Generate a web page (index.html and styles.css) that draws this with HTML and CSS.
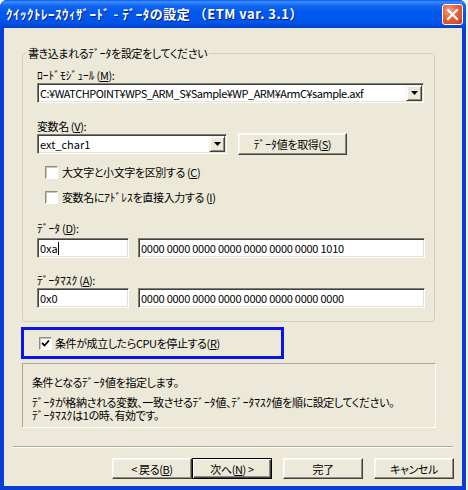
FILE: index.html
```html
<!DOCTYPE html>
<html lang="ja">
<head>
<meta charset="utf-8">
<title>ｸｲｯｸﾄﾚｰｽｳｨｻﾞｰﾄﾞ</title>
<link rel="stylesheet" href="styles.css">
</head>
<body>
<div class="window">
  <div class="titlebar">
    <span class="title">ｸｲｯｸﾄﾚｰｽｳｨｻﾞｰﾄﾞ - ﾃﾞｰﾀの設定 （ETM var. 3.1）</span>
    <span class="close">
      <svg width="13" height="13" viewBox="0 0 13 13"><path d="M2 2 L11 11 M11 2 L2 11" stroke="#fff" stroke-width="2.2" stroke-linecap="square"/></svg>
    </span>
  </div>
  <div class="client">
    <fieldset class="group">
      <legend class="group-title">書き込まれる<span class="hw">ﾃﾞｰﾀ</span>を設定をしてください</legend>
      <div class="label label-module"><span class="hw">ﾛｰﾄﾞﾓｼﾞｭｰﾙ</span> (<u>M</u>):</div>
      <div class="combo combo-module">
        <span class="field-text path">C:¥WATCHPOINT¥WPS_ARM_S¥Sample¥WP_ARM¥ArmC¥sample.axf</span>
        <span class="drop"><svg width="7" height="4" viewBox="0 0 7 4"><path d="M0 0 H7 L3.5 4 Z" fill="#000"/></svg></span>
      </div>
      <div class="label label-var">変数名 (<u>V</u>):</div>
      <div class="row var-row">
        <div class="combo combo-var">
          <span class="field-text">ext_char1</span>
          <span class="drop"><svg width="7" height="4" viewBox="0 0 7 4"><path d="M0 0 H7 L3.5 4 Z" fill="#000"/></svg></span>
        </div>
        <div class="btn btn-get"><span class="hw">ﾃﾞｰﾀ</span>値を取得(<u>S</u>)</div>
      </div>
      <div class="check check-case"><span class="box"></span><span>大文字と小文字を区別する (<u>C</u>)</span></div>
      <div class="check check-addr"><span class="box"></span><span>変数名に<span class="hw">ｱﾄﾞﾚｽ</span>を直接入力する (<u>I</u>)</span></div>
      <div class="label label-data"><span class="hw">ﾃﾞｰﾀ</span> (<u>D</u>):</div>
      <div class="row edit-row edit-row-data">
        <div class="edit edit-short"><span class="field-text">0xa</span><span class="caret"></span></div>
        <div class="edit edit-long"><span class="field-text digits">0000 0000 0000 0000 0000 0000 0000 1010</span></div>
      </div>
      <div class="label label-mask"><span class="hw">ﾃﾞｰﾀﾏｽｸ</span> (<u>A</u>):</div>
      <div class="row edit-row edit-row-mask">
        <div class="edit edit-short"><span class="field-text">0x0</span></div>
        <div class="edit edit-long"><span class="field-text digits">0000 0000 0000 0000 0000 0000 0000 0000</span></div>
      </div>
    </fieldset>

    <div class="stop-box">
      <div class="check check-stop">
        <span class="box"><svg width="9" height="9" viewBox="0 0 9 9"><path d="M1 4 L3.5 6.5 L8 1.5" fill="none" stroke="#000" stroke-width="1.8"/></svg></span>
        <span>条件が成立したらCPUを停止する(<u>R</u>)</span>
      </div>
    </div>

    <div class="desc">
      <p class="desc-line1">条件となる<span class="hw">ﾃﾞｰﾀ</span>値を指定します。</p>
      <p class="desc-line2"><span class="hw">ﾃﾞｰﾀ</span>が格納される変数、一致させる<span class="hw">ﾃﾞｰﾀ</span>値、<span class="hw">ﾃﾞｰﾀﾏｽｸ</span>値を順に設定してください。<br><span class="hw">ﾃﾞｰﾀﾏｽｸ</span>は1の時、有効です。</p>
    </div>

    <div class="separator"></div>

    <div class="buttons">
      <div class="btn wiz-btn">&lt; 戻る(<u>B</u>)</div>
      <div class="btn wiz-btn default">次へ(<u>N</u>) &gt;</div>
      <div class="btn wiz-btn gap">完了</div>
      <div class="btn wiz-btn gap">キャンセル</div>
    </div>
  </div>
</div>
</body>
</html>
```

FILE: styles.css
```css
* { box-sizing: border-box; }

html, body {
  margin: 0;
  padding: 0;
  background: #f4f3ee;
}

body {
  width: 468px;
  height: 490px;
  overflow: hidden;
  font-family: "Noto Sans CJK JP", "Liberation Sans", sans-serif;
  font-size: 11px;
  letter-spacing: -0.4px;
  font-feature-settings: "palt";
  color: #000;
}

u { text-decoration: underline; text-underline-offset: 1px; }

.hw {
  font-size: 11.5px;
  letter-spacing: 0;
}

.window {
  width: 466px;
  height: 490px;
  display: flex;
  flex-direction: column;
  background: #0a3fd6;
  border-radius: 7px 7px 0 0;
  overflow: hidden;
}

.titlebar {
  height: 28px;
  flex: none;
  display: flex;
  align-items: center;
  justify-content: space-between;
  padding: 0 3px 0 6px;
  background: linear-gradient(to bottom, #0a5ae8 0%, #3d8eff 7%, #1468f0 18%, #0058ee 45%, #0055ea 80%, #0048d8 94%, #003cc4 100%);
}

.title {
  color: #fff;
  font-weight: bold;
  font-size: 13px;
  line-height: 16px;
  letter-spacing: 0.5px;
  font-feature-settings: normal;
  text-shadow: 1px 1px 0 #0a1d7a;
  white-space: pre;
}

.close {
  width: 21px;
  height: 21px;
  border: 1px solid #fff;
  border-radius: 3px;
  background: radial-gradient(circle at 35% 30%, #f5a080 0%, #e4623c 45%, #c93d14 100%);
  display: flex;
  align-items: center;
  justify-content: center;
  margin-top: 1px;
}

.client {
  flex: 1;
  margin: 0 4px 4px 4px;
  background: #ece9d8;
  display: flex;
  flex-direction: column;
  align-items: flex-start;
}

/* group box */
.group {
  margin: 18px 0 0 18px;
  width: 413px;
  min-width: 0;
  padding: 0 0 13px 14px;
  border: 1px solid #d0d0bf;
  border-radius: 3px;
}

.group-title {
  margin-left: -11px;
  padding: 0 2px;
  line-height: 14px;
}

.label {
  line-height: 14px;
  white-space: nowrap;
}
.label-module { margin-top: 8px; }
.label-var { margin-top: 16px; }
.label-data { margin-top: 17px; }
.label-mask { margin-top: 15px; }

.row {
  display: flex;
  align-items: flex-start;
}

/* sunken fields */
.combo, .edit {
  height: 20px;
  background: #fff;
  border-style: solid;
  border-width: 1px;
  border-color: #7f7d74 #fff #fff #7f7d74;
  box-shadow: inset 1px 1px 0 #404040, inset -1px -1px 0 #e4e1d4;
  display: flex;
  align-items: center;
  padding: 0 2px 0 2px;
  white-space: nowrap;
  overflow: hidden;
}

.field-text {
  flex: 1;
  font-size: 11px;
  letter-spacing: 0;
  line-height: 14px;
  overflow: hidden;
}
.field-text.path { letter-spacing: -0.5px; }
.field-text.digits { letter-spacing: -0.25px; }

.combo { padding-right: 1px; }
.combo-module { margin-top: 1px; width: 387px; }
.combo-var { margin-top: 1px; width: 190px; }

.drop {
  flex: none;
  width: 16px;
  height: 16px;
  background: #ece9d8;
  border-style: solid;
  border-width: 1px;
  border-color: #f4f3ee #404040 #404040 #f4f3ee;
  box-shadow: inset 1px 1px 0 #fff, inset -1px -1px 0 #8f8d82;
  display: flex;
  align-items: center;
  justify-content: center;
}

/* raised buttons */
.btn {
  height: 22px;
  background: #ece9d8;
  border-style: solid;
  border-width: 1px;
  border-color: #fff #404040 #404040 #fff;
  box-shadow: inset -1px -1px 0 #8f8d82, inset 1px 1px 0 #f7f6f1;
  display: flex;
  align-items: center;
  justify-content: center;
  white-space: nowrap;
  line-height: 14px;
}

.btn-get {
  width: 109px;
  margin-left: 11px;
}

/* checkboxes */
.check {
  display: flex;
  align-items: center;
  height: 14px;
  line-height: 14px;
  white-space: nowrap;
}
.check-case { margin-top: 10px; margin-left: 8px; }
.check-addr { margin-top: 11px; margin-left: 8px; }

.box {
  width: 13px;
  height: 13px;
  flex: none;
  background: #fff;
  border-style: solid;
  border-width: 1px;
  border-color: #8f8d82 #fff #fff #8f8d82;
  box-shadow: inset 1px 1px 0 #c8c5b6;
  margin-right: 4px;
  display: flex;
  align-items: center;
  justify-content: center;
}

.edit-row { gap: 9px; }
.edit-row-data { margin-top: 3px; }
.edit-row-mask { margin-top: 1px; }
.edit-short { width: 92px; }
.edit-long { width: 287px; }

.caret {
  width: 1px;
  height: 13px;
  background: #000;
  flex: none;
  margin-right: auto;
}
.edit-short .field-text { flex: none; }

/* highlighted stop checkbox */
.stop-box {
  margin: 5px 0 0 17px;
  width: 263px;
  height: 32px;
  border: 3px solid #0a12f0;
  display: flex;
  align-items: center;
  padding-left: 15px;
}
.check-stop .box { margin-right: 3px; }

/* description panel */
.desc {
  margin: 4px 0 0 18px;
  width: 414px;
  height: 65px;
  border-style: solid;
  border-width: 1px;
  border-color: #aca899 #fff #fff #aca899;
  padding: 11px 0 0 9px;
}
.desc p { margin: 0; white-space: nowrap; }
.desc-line1 { line-height: 14px; }
.desc-line2 { margin-top: 7px !important; line-height: 13px; }

.separator {
  margin: 18px 0 0 9px;
  width: 440px;
  height: 2px;
  border-top: 1px solid #aca899;
  border-bottom: 1px solid #fff;
}

.buttons {
  margin-top: 10px;
  align-self: stretch;
  display: flex;
  justify-content: flex-end;
  padding-right: 8px;
}

.wiz-btn { width: 80px; height: 21px; }
.wiz-btn.gap { margin-left: 11px; }
.wiz-btn.default {
  border-color: #000;
  box-shadow: inset 1px 1px 0 #fff, inset -1px -1px 0 #404040, inset -2px -2px 0 #8f8d82;
}
```
